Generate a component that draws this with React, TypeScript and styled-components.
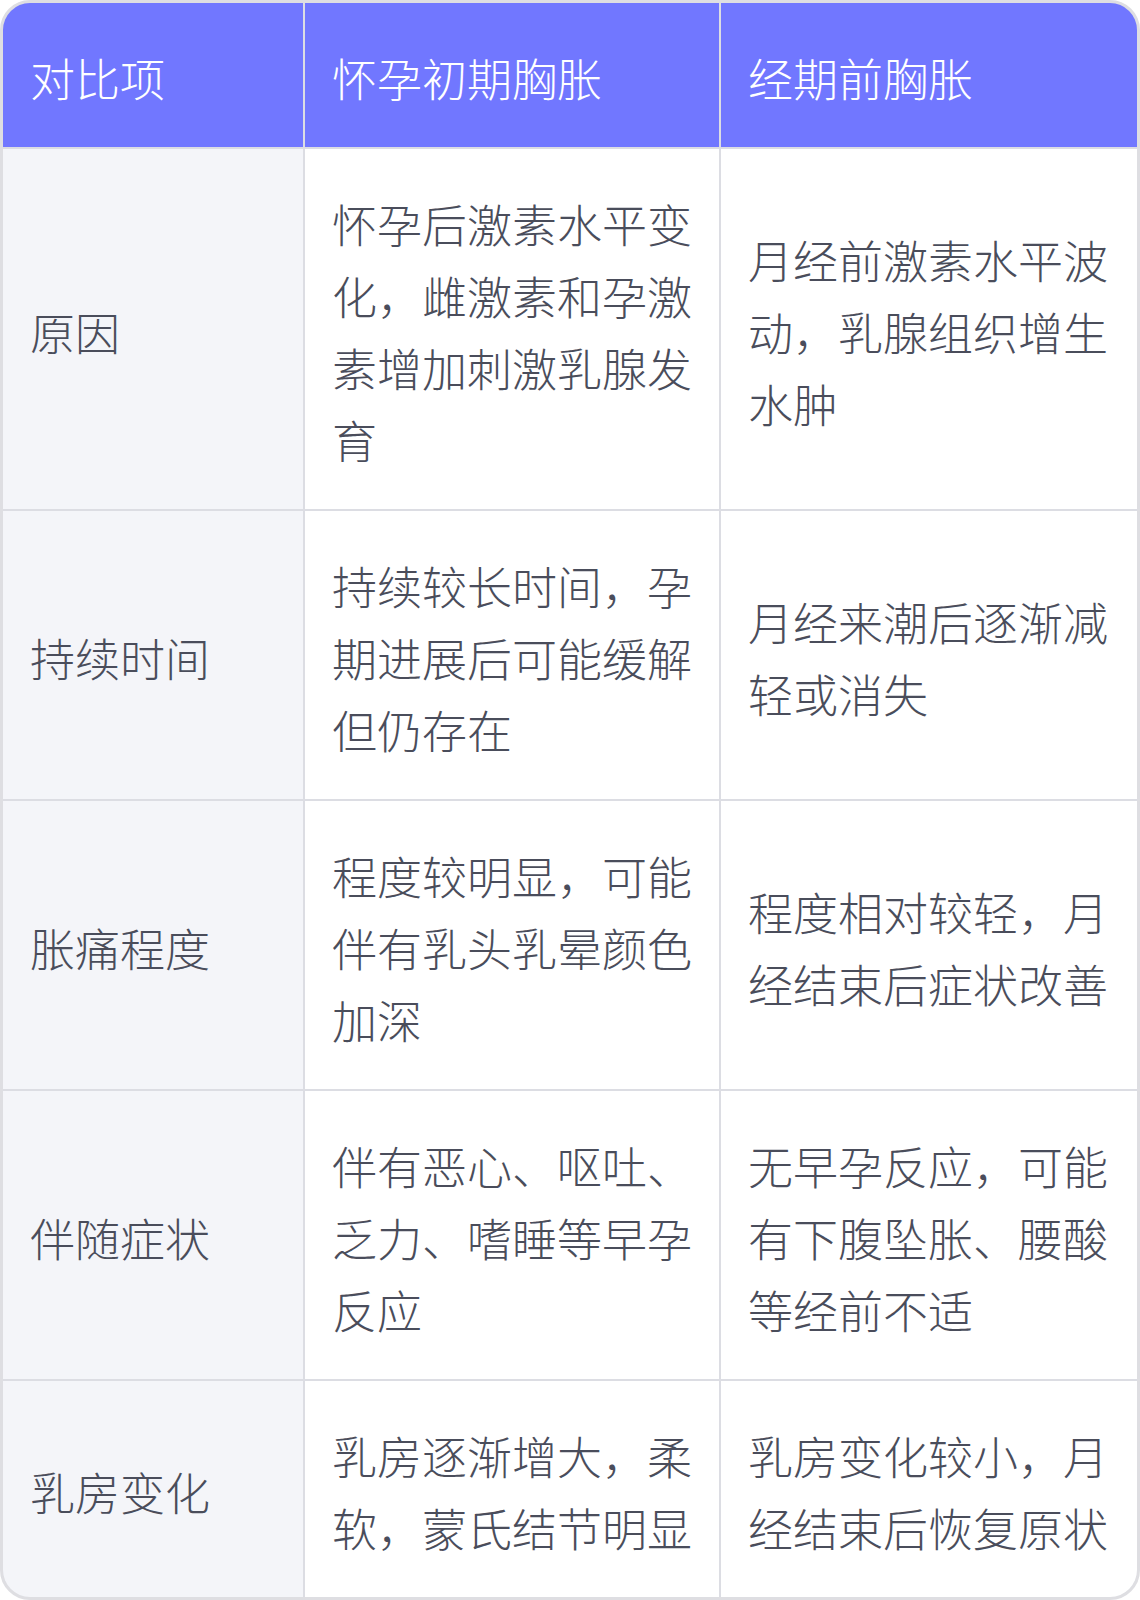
import React from "react";
import styled, { createGlobalStyle } from "styled-components";

const Global = createGlobalStyle`
  html, body {
    margin: 0;
    padding: 0;
    background: #ffffff;
  }
  body {
    font-family: "Noto Sans CJK SC", "Noto Sans", sans-serif;
  }
`;

const Table = styled.div`
  box-sizing: border-box;
  width: 1140px;
  display: grid;
  grid-template-columns: 300px 414px 416px;
  gap: 2px;
  background: #dcdde3;
  border: 3px solid #dedee2;
  border-radius: 30px;
  overflow: hidden;
`;

type CellKind = "head" | "label" | "body";

const Cell = styled.div<{ $kind: CellKind }>`
  box-sizing: border-box;
  display: flex;
  align-items: center;
  padding: 39px 22px 33px 27px;
  font-size: 45px;
  line-height: 72px;
  font-weight: 300;
  color: ${(p) => (p.$kind === "head" ? "#ffffff" : "#4a4d5b")};
  background: ${(p) =>
    p.$kind === "head" ? "#7177ff" : p.$kind === "label" ? "#f4f5f9" : "#ffffff"};
  word-break: break-all;
`;

const headers = ["对比项", "怀孕初期胸胀", "经期前胸胀"];

const rows: [string, string, string][] = [
  ["原因", "怀孕后激素水平变化，雌激素和孕激素增加刺激乳腺发育", "月经前激素水平波动，乳腺组织增生水肿"],
  ["持续时间", "持续较长时间，孕期进展后可能缓解但仍存在", "月经来潮后逐渐减轻或消失"],
  ["胀痛程度", "程度较明显，可能伴有乳头乳晕颜色加深", "程度相对较轻，月经结束后症状改善"],
  ["伴随症状", "伴有恶心、呕吐、乏力、嗜睡等早孕反应", "无早孕反应，可能有下腹坠胀、腰酸等经前不适"],
  ["乳房变化", "乳房逐渐增大，柔软，蒙氏结节明显", "乳房变化较小，月经结束后恢复原状"],
];

export default function App() {
  return (
    <>
      <Global />
      <Table>
        {headers.map((h) => (
          <Cell key={h} $kind="head">
            {h}
          </Cell>
        ))}
        {rows.map((r) => (
          <React.Fragment key={r[0]}>
            <Cell $kind="label">{r[0]}</Cell>
            <Cell $kind="body">{r[1]}</Cell>
            <Cell $kind="body">{r[2]}</Cell>
          </React.Fragment>
        ))}
      </Table>
    </>
  );
}
